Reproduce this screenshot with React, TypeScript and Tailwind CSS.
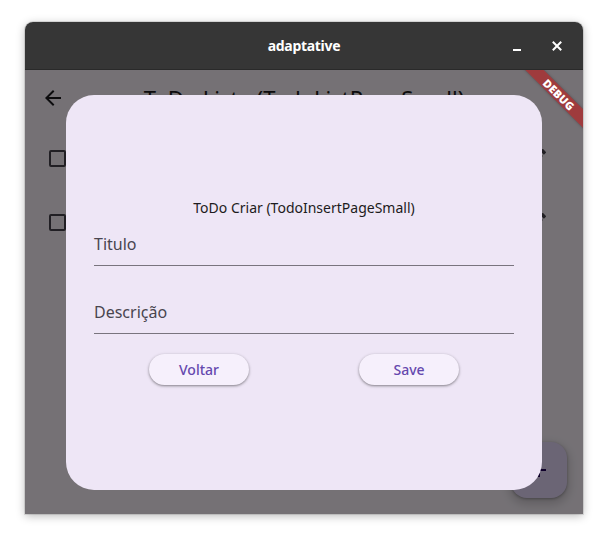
import React from "react";
import { MdArrowBack, MdEdit, MdAdd } from "react-icons/md";

const font = { fontFamily: '"Noto Sans", "Open Sans", sans-serif' };

export default function App() {
  return (
    <div className="w-[608px] h-[542px] bg-white pt-[22px] pl-[25px]" style={font}>
      <div className="w-[558px] h-[492px] rounded-t-[8px] overflow-hidden flex flex-col shadow-[0_2px_10px_rgba(0,0,0,0.28)] ring-1 ring-black/10">
        {/* Title bar */}
        <div className="h-[48px] bg-[#363636] grid grid-cols-[1fr_auto_1fr] items-center border-b border-[#2a2a2a]">
          <div />
          <div className="text-white text-[14px] font-bold tracking-[-0.3px]">adaptative</div>
          <div className="flex justify-end items-center gap-[24px] pr-[18px]">
            <div className="w-[16px] h-[16px] flex items-end justify-center pb-[3px]">
              <div className="w-[8px] h-[2px] bg-white" />
            </div>
            <svg width="16" height="16" viewBox="0 0 16 16">
              <path d="M4.5 4.5 L11.5 11.5 M11.5 4.5 L4.5 11.5" stroke="white" strokeWidth="2" strokeLinecap="square" />
            </svg>
          </div>
        </div>

        {/* Content */}
        <div className="flex-1 relative overflow-hidden bg-[#fef7ff]">
          <div className="h-[56px] grid grid-cols-[56px_1fr_56px] items-center">
            <div className="pl-[16px] text-[#1d1b20]">
              <MdArrowBack size={24} />
            </div>
            <div className="text-center text-[22px] text-[#1d1b20] whitespace-nowrap">
              ToDo Lista (TodoListPageSmall)
            </div>
            <div />
          </div>
          <div className="flex flex-col">
            {[0, 1].map((i) => (
              <div key={i} className="h-[64px] flex items-center pl-[24px] pr-[34px]">
                <div className="w-[17px] h-[17px] border-2 border-[#49454f] rounded-[2px]" />
                <div className="flex-1" />
                <MdEdit size={24} className="text-[#49454f]" />
              </div>
            ))}
          </div>

          <div className="absolute bottom-4 right-4 w-[56px] h-[56px] rounded-[16px] bg-[#eaddff] flex items-center justify-center text-[#21005d] shadow-[0_1px_3px_rgba(0,0,0,0.3),0_4px_8px_3px_rgba(0,0,0,0.15)]">
            <MdAdd size={24} />
          </div>

          {/* Scrim */}
          <div className="absolute inset-0 bg-black/[0.54]" />

          {/* Dialog */}
          <div className="absolute inset-0 flex items-center justify-center">
            <div className="w-[476px] h-[395px] rounded-[28px] bg-[#eee6f6] flex flex-col justify-center px-[28px]">
              <div className="h-[20px] leading-[20px] text-center text-[14px] text-[#1d1b20]">
                ToDo Criar (TodoInsertPageSmall)
              </div>
              <div className="h-[48px] flex items-end pb-[11px] border-b border-[#79747e]">
                <span className="text-[16px] leading-[20px] text-[#49454f]">Titulo</span>
              </div>
              <div className="h-[18px]" />
              <div className="h-[50px] flex items-end pb-[11px] border-b border-[#79747e]">
                <span className="text-[16px] leading-[20px] text-[#49454f]">Descrição</span>
              </div>
              <div className="mt-[20px] mb-[1px] flex justify-around">
                <button className="w-[100px] h-[31px] rounded-full bg-[#f6f0fc] text-[#6548ae] text-[14px] font-medium shadow-[0_1px_2px_rgba(0,0,0,0.3),0_1px_3px_1px_rgba(0,0,0,0.12)]">
                  Voltar
                </button>
                <button className="w-[100px] h-[31px] rounded-full bg-[#f6f0fc] text-[#6548ae] text-[14px] font-medium shadow-[0_1px_2px_rgba(0,0,0,0.3),0_1px_3px_1px_rgba(0,0,0,0.12)]">
                  Save
                </button>
              </div>
            </div>
          </div>

          {/* Debug banner */}
          <div className="absolute left-[474px] top-[18px] w-[120px] h-[13px] rotate-45 bg-[#b71c1c]/[0.63] flex items-center justify-center shadow-[0_0_3px_rgba(0,0,0,0.3)]">
            <span className="text-white text-[11px] font-black leading-none tracking-[0.2px]">DEBUG</span>
          </div>
        </div>
      </div>
    </div>
  );
}
